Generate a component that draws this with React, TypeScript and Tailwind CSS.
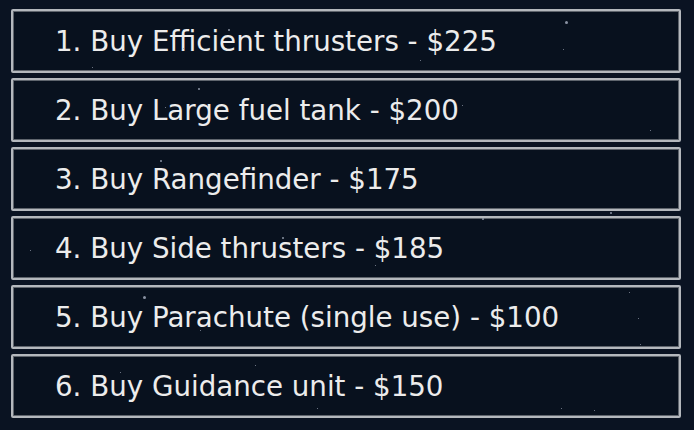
import React from "react";

const items = [
  "1. Buy Efficient thrusters - $225",
  "2. Buy Large fuel tank - $200",
  "3. Buy Rangefinder - $175",
  "4. Buy Side thrusters - $185",
  "5. Buy Parachute (single use) - $100",
  "6. Buy Guidance unit - $150",
];

const stars: [number, number, number][] = [
  [228, 29, 2], [565, 21, 3], [92, 67, 1], [183, 48, 1], [563, 49, 1],
  [198, 88, 2], [165, 107, 1], [160, 160, 2], [482, 218, 2], [610, 212, 2],
  [282, 237, 2], [143, 296, 3], [30, 250, 1], [400, 174, 1], [640, 344, 1],
  [638, 318, 1], [629, 292, 1], [547, 312, 1], [462, 105, 1], [120, 372, 1],
  [594, 410, 1], [561, 408, 1], [317, 408, 1], [200, 330, 1], [650, 130, 1],
  [375, 265, 1], [420, 60, 1], [255, 365, 1],
];

export default function App() {
  return (
    <div className="relative w-[694px] h-[430px] overflow-hidden bg-[#0a1322] px-[11px] pt-[9px]">
      <div className="flex w-[670px] flex-col gap-[5px]">
        {items.map((t) => (
          <div
            key={t}
            className="flex h-[64px] items-center rounded-[2px] border-2 border-[#b4b8bd] bg-[#08111e] pl-[42px] pt-[2px] shadow-[inset_0_0_0_1px_#5f656d]"
          >
            <span
              className="text-[27.7px] leading-none text-[#ececec]"
              style={{ fontFamily: '"DejaVu Sans", sans-serif' }}
            >
              {t}
            </span>
          </div>
        ))}
      </div>
      {stars.map(([x, y, s], i) => (
        <div
          key={i}
          className="absolute rounded-full bg-[#8a93a3]"
          style={{ left: x, top: y, width: s, height: s }}
        />
      ))}
    </div>
  );
}
